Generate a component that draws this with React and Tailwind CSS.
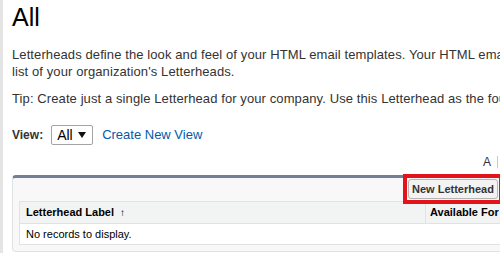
const App = () => {
  return (
    <div className="w-[500px] h-[253px] overflow-hidden flex bg-white font-['Liberation_Sans',Arial,sans-serif]">
      <div className="w-[3px] shrink-0 bg-[#e4e4e4]" />
      <div className="w-[900px] shrink-0 pl-[9px]">
        <h1 className="pt-[5px] text-[25px] leading-[25px] font-normal text-black">All</h1>

        <div className="mt-[16px] text-[13px] leading-[17px] tracking-[0.1px] text-[#333]">
          <p>
            Letterheads define the look and feel of your HTML email templates. Your HTML email templates can inherit the
            <br />
            list of your organization's Letterheads.
          </p>
          <p className="mt-[10px]">
            Tip: Create just a single Letterhead for your company. Use this Letterhead as the foundation for all of your email templates.
          </p>
        </div>

        <div className="mt-[18px] flex items-center h-[20px]">
          <span className="text-[12px] font-bold text-[#333]">View:</span>
          <div className="ml-[8px] w-[42px] h-[20px] flex items-center justify-between pl-[5px] pr-[6px] border border-[#a4a4a4] rounded-[2px] bg-white">
            <span className="text-[14px] text-black leading-none">All</span>
            <svg width="8" height="6" viewBox="0 0 8 6">
              <path d="M0 0 L8 0 L4 6 Z" fill="#111" />
            </svg>
          </div>
          <a className="ml-[9px] text-[13px] text-[#015ba7]">Create New View</a>
        </div>

        <div className="mt-[8px] ml-[471px] flex items-center h-[17px] text-[12px] text-[#333]">
          <span>A</span>
          <span className="ml-[6px] w-px h-[12px] bg-[#c8c8c8]" />
        </div>

        <div className="mt-[5px] w-[800px] border border-[#e0e3e5] border-t-[3px] border-t-[#747e96] rounded-[4px] bg-[#f8f8f8] pl-[6px] pb-[6px]">
          <div className="flex pt-[1px]">
            <div className="w-[389px] shrink-0" />
            <div className="relative flex">
              <button className="h-[20px] px-[3px] text-[11px] font-bold text-[#333] bg-[#f3f3f3] border border-[#b5b5b5] rounded-[3px]">
                New Letterhead
              </button>
              <span className="absolute -inset-[5px] border-[4px] border-[#e3131b]" />
            </div>
          </div>
          <div className="mt-[2px] border border-[#e0e3e5] bg-white">
            <div className="flex h-[22px] bg-[#f2f3f3] border-b border-[#e0e3e5] text-[11px] font-bold text-black">
              <div className="w-[406px] flex items-center pl-[6px] border-r border-[#e0e3e5]">
                Letterhead Label
                <span className="ml-[6px] text-[10px] font-normal">↑</span>
              </div>
              <div className="flex items-center pl-[4px]">Available For Use</div>
            </div>
            <div className="h-[20px] flex items-center pl-[6px] text-[11px] text-black">No records to display.</div>
          </div>
        </div>
      </div>
    </div>
  );
};

export default App;
